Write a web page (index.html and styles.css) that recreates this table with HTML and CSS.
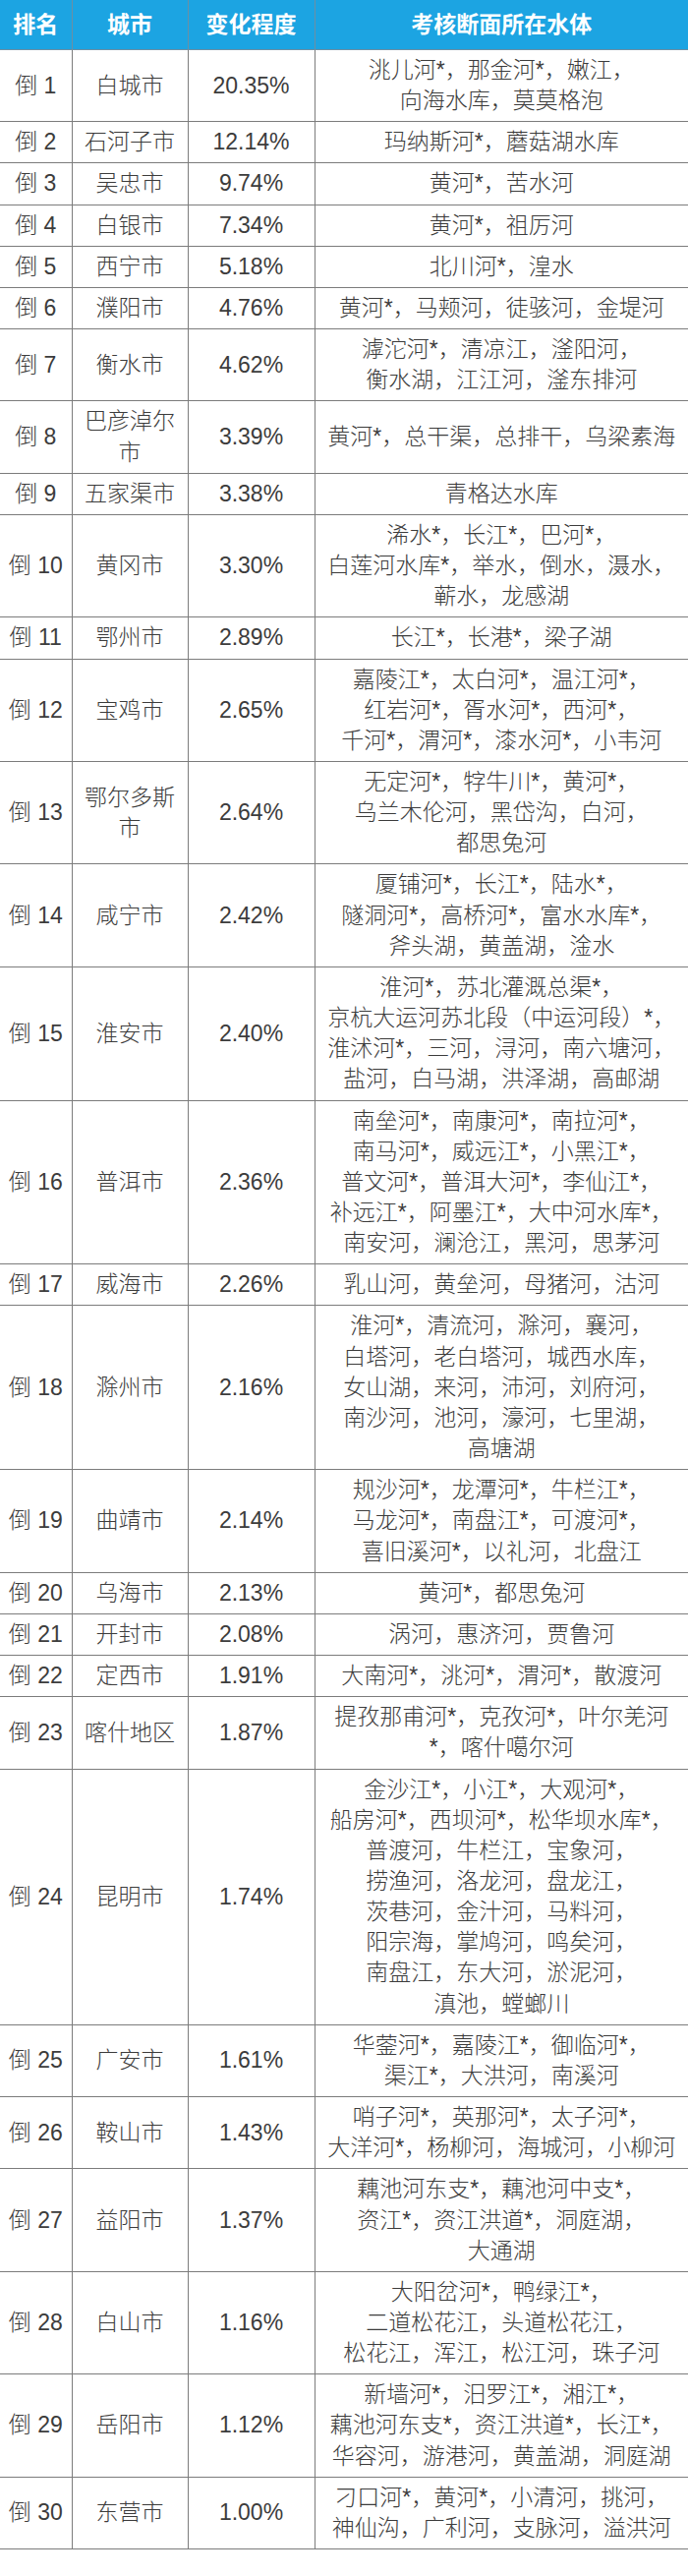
FILE: index.html
```html
<!DOCTYPE html>
<html lang="zh-CN">
<head>
<meta charset="utf-8">
<title>考核断面水质变化排名</title>
<link rel="stylesheet" href="styles.css">
</head>
<body>
<table class="rank">
<colgroup><col class="c1"><col class="c2"><col class="c3"><col class="c4"></colgroup>
<thead>
<tr><th>排名</th><th>城市</th><th>变化程度</th><th>考核断面所在水体</th></tr>
</thead>
<tbody>
<tr><td>倒 1</td><td>白城市</td><td>20.35%</td><td>洮儿河*，那金河*，嫩江，<br>向海水库，莫莫格泡</td></tr>
<tr><td>倒 2</td><td>石河子市</td><td>12.14%</td><td>玛纳斯河*，蘑菇湖水库</td></tr>
<tr><td>倒 3</td><td>吴忠市</td><td>9.74%</td><td>黄河*，苦水河</td></tr>
<tr><td>倒 4</td><td>白银市</td><td>7.34%</td><td>黄河*，祖厉河</td></tr>
<tr><td>倒 5</td><td>西宁市</td><td>5.18%</td><td>北川河*，湟水</td></tr>
<tr><td>倒 6</td><td>濮阳市</td><td>4.76%</td><td>黄河*，马颊河，徒骇河，金堤河</td></tr>
<tr><td>倒 7</td><td>衡水市</td><td>4.62%</td><td>滹沱河*，清凉江，滏阳河，<br>衡水湖，江江河，滏东排河</td></tr>
<tr><td>倒 8</td><td>巴彦淖尔市</td><td>3.39%</td><td>黄河*，总干渠，总排干，乌梁素海</td></tr>
<tr><td>倒 9</td><td>五家渠市</td><td>3.38%</td><td>青格达水库</td></tr>
<tr><td>倒 10</td><td>黄冈市</td><td>3.30%</td><td>浠水*，长江*，巴河*，<br>白莲河水库*，举水，倒水，滠水，<br>蕲水，龙感湖</td></tr>
<tr><td>倒 11</td><td>鄂州市</td><td>2.89%</td><td>长江*，长港*，梁子湖</td></tr>
<tr><td>倒 12</td><td>宝鸡市</td><td>2.65%</td><td>嘉陵江*，太白河*，温江河*，<br>红岩河*，胥水河*，西河*，<br>千河*，渭河*，漆水河*，小韦河</td></tr>
<tr><td>倒 13</td><td>鄂尔多斯市</td><td>2.64%</td><td>无定河*，牸牛川*，黄河*，<br>乌兰木伦河，黑岱沟，白河，<br>都思兔河</td></tr>
<tr><td>倒 14</td><td>咸宁市</td><td>2.42%</td><td>厦铺河*，长江*，陆水*，<br>隧洞河*，高桥河*，富水水库*，<br>斧头湖，黄盖湖，淦水</td></tr>
<tr><td>倒 15</td><td>淮安市</td><td>2.40%</td><td>淮河*，苏北灌溉总渠*，<br>京杭大运河苏北段（中运河段）*，<br>淮沭河*，三河，浔河，南六塘河，<br>盐河，白马湖，洪泽湖，高邮湖</td></tr>
<tr><td>倒 16</td><td>普洱市</td><td>2.36%</td><td>南垒河*，南康河*，南拉河*，<br>南马河*，威远江*，小黑江*，<br>普文河*，普洱大河*，李仙江*，<br>补远江*，阿墨江*，大中河水库*，<br>南安河，澜沧江，黑河，思茅河</td></tr>
<tr><td>倒 17</td><td>威海市</td><td>2.26%</td><td>乳山河，黄垒河，母猪河，沽河</td></tr>
<tr><td>倒 18</td><td>滁州市</td><td>2.16%</td><td>淮河*，清流河，滁河，襄河，<br>白塔河，老白塔河，城西水库，<br>女山湖，来河，沛河，刘府河，<br>南沙河，池河，濠河，七里湖，<br>高塘湖</td></tr>
<tr><td>倒 19</td><td>曲靖市</td><td>2.14%</td><td>规沙河*，龙潭河*，牛栏江*，<br>马龙河*，南盘江*，可渡河*，<br>喜旧溪河*，以礼河，北盘江</td></tr>
<tr><td>倒 20</td><td>乌海市</td><td>2.13%</td><td>黄河*，都思兔河</td></tr>
<tr><td>倒 21</td><td>开封市</td><td>2.08%</td><td>涡河，惠济河，贾鲁河</td></tr>
<tr><td>倒 22</td><td>定西市</td><td>1.91%</td><td>大南河*，洮河*，渭河*，散渡河</td></tr>
<tr><td>倒 23</td><td>喀什地区</td><td>1.87%</td><td>提孜那甫河*，克孜河*，叶尔羌河<br>*，喀什噶尔河</td></tr>
<tr><td>倒 24</td><td>昆明市</td><td>1.74%</td><td>金沙江*，小江*，大观河*，<br>船房河*，西坝河*，松华坝水库*，<br>普渡河，牛栏江，宝象河，<br>捞渔河，洛龙河，盘龙江，<br>茨巷河，金汁河，马料河，<br>阳宗海，掌鸠河，鸣矣河，<br>南盘江，东大河，淤泥河，<br>滇池，螳螂川</td></tr>
<tr><td>倒 25</td><td>广安市</td><td>1.61%</td><td>华蓥河*，嘉陵江*，御临河*，<br>渠江*，大洪河，南溪河</td></tr>
<tr><td>倒 26</td><td>鞍山市</td><td>1.43%</td><td>哨子河*，英那河*，太子河*，<br>大洋河*，杨柳河，海城河，小柳河</td></tr>
<tr><td>倒 27</td><td>益阳市</td><td>1.37%</td><td>藕池河东支*，藕池河中支*，<br>资江*，资江洪道*，洞庭湖，<br>大通湖</td></tr>
<tr><td>倒 28</td><td>白山市</td><td>1.16%</td><td>大阳岔河*，鸭绿江*，<br>二道松花江，头道松花江，<br>松花江，浑江，松江河，珠子河</td></tr>
<tr><td>倒 29</td><td>岳阳市</td><td>1.12%</td><td>新墙河*，汨罗江*，湘江*，<br>藕池河东支*，资江洪道*，长江*，<br>华容河，游港河，黄盖湖，洞庭湖</td></tr>
<tr><td>倒 30</td><td>东营市</td><td>1.00%</td><td>刁口河*，黄河*，小清河，挑河，<br>神仙沟，广利河，支脉河，溢洪河</td></tr>
</tbody>
</table>
</body>
</html>
```

FILE: styles.css
```css
html, body {
  margin: 0;
  padding: 0;
  background: #ffffff;
}

.rank {
  width: 700px;
  border-collapse: collapse;
  table-layout: fixed;
  font-family: "Liberation Sans", "Noto Sans CJK SC", sans-serif;
  color: #3c3c3c;
}

.c1 { width: 73px; }
.c2 { width: 118px; }
.c3 { width: 129px; }
.c4 { width: 380px; }

.rank th {
  background: #1ca4e2;
  color: #ffffff;
  font-size: 23px;
  font-weight: 700;
  height: 50px;
  padding: 0;
  line-height: 28px;
  border: 1px solid #6d8fa3;
  border-top: none;
  text-align: center;
  vertical-align: middle;
}

.rank td {
  font-size: 23px;
  font-weight: 300;
  line-height: 31.15px;
  padding: 5px 4px;
  border: 1px solid #7c7c7c;
  text-align: center;
  vertical-align: middle;
  white-space: normal;
}

.rank td:nth-child(2) {
  padding: 5px 6px;
}

.rank td:nth-child(4) {
  padding: 5px 2px;
  white-space: nowrap;
}

.rank tr > :first-child { border-left: none; }
.rank tr > :last-child { border-right: none; }
```
